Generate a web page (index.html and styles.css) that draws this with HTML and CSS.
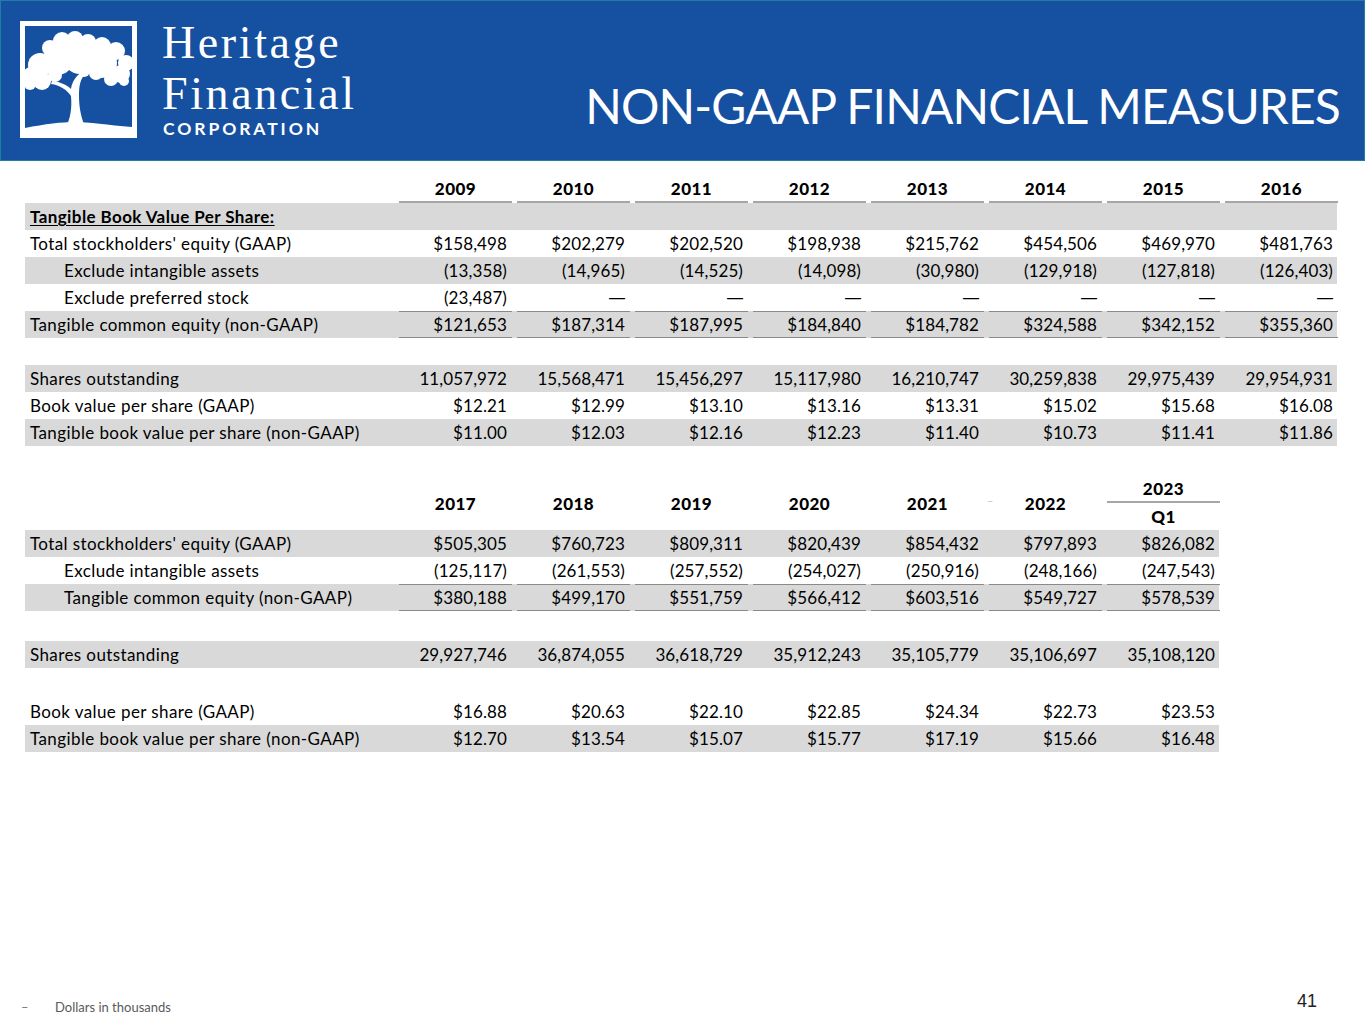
FILE: index.html
```html
<!DOCTYPE html>
<html lang="en">
<head>
<meta charset="utf-8">
<title>Non-GAAP Financial Measures</title>
<link rel="stylesheet" href="styles.css">
</head>
<body>
<div class="page">
  <header class="banner">
    <div class="logo">
      <svg class="tree" viewBox="0 0 117 117" width="117" height="117" aria-hidden="true">
        <rect x="0" y="0" width="117" height="117" fill="#fff"/>
        <rect x="5" y="5" width="107" height="107" fill="#1650a0"/>
        <g fill="#fff">
          <circle cx="30" cy="27" r="8"/>
          <circle cx="42" cy="20" r="9"/>
          <circle cx="55" cy="18" r="8"/>
          <circle cx="68" cy="21" r="8"/>
          <circle cx="82" cy="25" r="9"/>
          <circle cx="96" cy="30" r="9"/>
          <circle cx="106" cy="42" r="8"/>
          <circle cx="101" cy="53" r="9"/>
          <circle cx="82" cy="42" r="15"/>
          <circle cx="60" cy="36" r="17"/>
          <circle cx="38" cy="39" r="15"/>
          <circle cx="20" cy="44" r="12"/>
          <circle cx="11" cy="54" r="8"/>
          <circle cx="22" cy="60" r="9"/>
          <circle cx="10" cy="63" r="6"/>
          <circle cx="35" cy="54" r="7"/>
          <circle cx="91" cy="58" r="7"/>
          <circle cx="104" cy="60" r="5"/>
          <circle cx="76" cy="52" r="7"/>
          <circle cx="64" cy="50" r="6"/>
          <path d="M45 108 C51 97 52 86 51 75 C47 69 40 64 31 63 L32 60 C41 61 47 64 51 68 C52 60 57 54 63 50 L66 52 C60 58 59 65 59 75 C59 86 61 97 66 108 Z"/>
          <path d="M5 107 C25 103 42 101 55 101 C68 101 88 104 112 106 L112 112 L5 112 Z"/>
        </g>
      </svg>
      <div class="wordmark">
        <div class="wm-name">Heritage<br>Financial</div>
        <div class="wm-corp">CORPORATION</div>
      </div>
    </div>
    <h1 class="title">NON-GAAP FINANCIAL MEASURES</h1>
  </header>

  <main class="content">
    <section class="tbl t1">
      <div class="row head">
        <div class="lbl"></div>
        <div class="yr">2009</div><div class="yr">2010</div><div class="yr">2011</div><div class="yr">2012</div>
        <div class="yr">2013</div><div class="yr">2014</div><div class="yr">2015</div><div class="yr">2016</div>
      </div>
      <div class="row shade">
        <div class="lbl section">Tangible Book Value Per Share:</div>
      </div>
      <div class="row">
        <div class="lbl">Total stockholders' equity (GAAP)</div>
        <div class="num">$158,498</div><div class="num">$202,279</div><div class="num">$202,520</div><div class="num">$198,938</div>
        <div class="num">$215,762</div><div class="num">$454,506</div><div class="num">$469,970</div><div class="num">$481,763</div>
      </div>
      <div class="row shade">
        <div class="lbl ind">Exclude intangible assets</div>
        <div class="num">(13,358)</div><div class="num">(14,965)</div><div class="num">(14,525)</div><div class="num">(14,098)</div>
        <div class="num">(30,980)</div><div class="num">(129,918)</div><div class="num">(127,818)</div><div class="num">(126,403)</div>
      </div>
      <div class="row">
        <div class="lbl ind">Exclude preferred stock</div>
        <div class="num">(23,487)</div><div class="num nil">—</div><div class="num nil">—</div><div class="num nil">—</div>
        <div class="num nil">—</div><div class="num nil">—</div><div class="num nil">—</div><div class="num nil">—</div>
      </div>
      <div class="row shade total">
        <div class="lbl">Tangible common equity (non-GAAP)</div>
        <div class="num">$121,653</div><div class="num">$187,314</div><div class="num">$187,995</div><div class="num">$184,840</div>
        <div class="num">$184,782</div><div class="num">$324,588</div><div class="num">$342,152</div><div class="num">$355,360</div>
      </div>
      <div class="spacer s28"></div>
      <div class="row shade">
        <div class="lbl">Shares outstanding</div>
        <div class="num">11,057,972</div><div class="num">15,568,471</div><div class="num">15,456,297</div><div class="num">15,117,980</div>
        <div class="num">16,210,747</div><div class="num">30,259,838</div><div class="num">29,975,439</div><div class="num">29,954,931</div>
      </div>
      <div class="row">
        <div class="lbl">Book value per share (GAAP)</div>
        <div class="num">$12.21</div><div class="num">$12.99</div><div class="num">$13.10</div><div class="num">$13.16</div>
        <div class="num">$13.31</div><div class="num">$15.02</div><div class="num">$15.68</div><div class="num">$16.08</div>
      </div>
      <div class="row shade">
        <div class="lbl">Tangible book value per share (non-GAAP)</div>
        <div class="num">$11.00</div><div class="num">$12.03</div><div class="num">$12.16</div><div class="num">$12.23</div>
        <div class="num">$11.40</div><div class="num">$10.73</div><div class="num">$11.41</div><div class="num">$11.86</div>
      </div>
    </section>

    <section class="tbl t2">
      <div class="row head2">
        <div class="lbl"></div>
        <div class="yr">2017</div><div class="yr">2018</div><div class="yr">2019</div><div class="yr">2020</div>
        <div class="yr mark">2021</div><div class="yr">2022</div>
        <div class="yr stack"><span class="y-top">2023</span><span class="y-bot">Q1</span></div>
      </div>
      <div class="row shade">
        <div class="lbl">Total stockholders' equity (GAAP)</div>
        <div class="num">$505,305</div><div class="num">$760,723</div><div class="num">$809,311</div><div class="num">$820,439</div>
        <div class="num">$854,432</div><div class="num">$797,893</div><div class="num">$826,082</div>
      </div>
      <div class="row">
        <div class="lbl ind">Exclude intangible assets</div>
        <div class="num">(125,117)</div><div class="num">(261,553)</div><div class="num">(257,552)</div><div class="num">(254,027)</div>
        <div class="num">(250,916)</div><div class="num">(248,166)</div><div class="num">(247,543)</div>
      </div>
      <div class="row shade total">
        <div class="lbl ind">Tangible common equity (non-GAAP)</div>
        <div class="num">$380,188</div><div class="num">$499,170</div><div class="num">$551,759</div><div class="num">$566,412</div>
        <div class="num">$603,516</div><div class="num">$549,727</div><div class="num">$578,539</div>
      </div>
      <div class="spacer s30"></div>
      <div class="row shade">
        <div class="lbl">Shares outstanding</div>
        <div class="num">29,927,746</div><div class="num">36,874,055</div><div class="num">36,618,729</div><div class="num">35,912,243</div>
        <div class="num">35,105,779</div><div class="num">35,106,697</div><div class="num">35,108,120</div>
      </div>
      <div class="spacer s30"></div>
      <div class="row">
        <div class="lbl">Book value per share (GAAP)</div>
        <div class="num">$16.88</div><div class="num">$20.63</div><div class="num">$22.10</div><div class="num">$22.85</div>
        <div class="num">$24.34</div><div class="num">$22.73</div><div class="num">$23.53</div>
      </div>
      <div class="row shade">
        <div class="lbl">Tangible book value per share (non-GAAP)</div>
        <div class="num">$12.70</div><div class="num">$13.54</div><div class="num">$15.07</div><div class="num">$15.77</div>
        <div class="num">$17.19</div><div class="num">$15.66</div><div class="num">$16.48</div>
      </div>
    </section>
  </main>

  <footer class="foot">
    <div class="note"><span class="dash">–</span><span>Dollars in thousands</span></div>
    <div class="pgnum">41</div>
  </footer>
</div>
</body>
</html>
```

FILE: styles.css
```css
* { box-sizing: border-box; }
html, body { margin: 0; padding: 0; background: #fff; }
body {
  font-family: Lato, "Noto Sans", "Liberation Sans", sans-serif;
  color: #000;
}
.page {
  width: 1365px;
  height: 1024px;
  display: flex;
  flex-direction: column;
}

/* Banner */
.banner {
  height: 161px;
  background: #1650a0;
  border: 1px solid #1e7fa3;
  display: flex;
  justify-content: space-between;
  align-items: flex-start;
  flex-shrink: 0;
}
.logo {
  display: flex;
  align-items: flex-start;
  padding: 20px 0 0 19px;
}
.tree { display: block; }
.wordmark {
  margin-left: 25px;
  margin-top: -4px;
  color: #fff;
}
.wm-name {
  font-family: "Liberation Serif", "DejaVu Serif", serif;
  font-size: 46px;
  line-height: 51px;
  letter-spacing: 2.6px;
}
.wm-corp {
  font-family: Lato, "Noto Sans", sans-serif;
  font-weight: 700;
  font-size: 17.5px;
  letter-spacing: 2.9px;
  line-height: 24px;
  margin-top: -2px;
  margin-left: 1px;
}
.title {
  margin: 77px 24px 0 0;
  color: #fff;
  font-family: Lato, "Noto Sans", sans-serif;
  font-weight: 400;
  font-size: 48px;
  letter-spacing: -0.9px;
  line-height: 56px;
  white-space: nowrap;
}

/* Tables */
.content {
  padding: 14px 0 0 25px;
  display: flex;
  flex-direction: column;
}
.tbl { display: flex; flex-direction: column; }
.t2 { margin-top: 30px; }
.row {
  display: grid;
  grid-template-columns: 369px repeat(8, 113px);
  column-gap: 5px;
  height: 27px;
  font-size: 17px;
}
.t1 .row { width: 1312px; }
.t2 .row { width: 1194px; grid-template-columns: 369px repeat(7, 113px); }
.shade { background: #d9d9d9; }
.lbl {
  padding-left: 5px;
  display: flex;
  align-items: center;
  white-space: nowrap;
  letter-spacing: 0.4px;
}
.ind { padding-left: 39px; }
.section {
  font-weight: 700;
  text-decoration: underline;
  text-underline-offset: 2px;
  text-decoration-thickness: 1px;
}
.num {
  display: flex;
  align-items: center;
  justify-content: flex-end;
  padding-right: 5px;
  white-space: nowrap;
  letter-spacing: 0.1px;
}
.nil {
  font-family: "Liberation Sans", Arial, sans-serif;
  font-size: 16px;
}
.total .num {
  border-top: 1px solid #8a8a8a;
  border-bottom: 1px solid #8a8a8a;
}
.yr {
  display: flex;
  align-items: center;
  justify-content: center;
  font-weight: 900;
  font-size: 17px;
  letter-spacing: 0.5px;
}
.head .yr { border-bottom: 2px solid #a6a6a6; }
.head { height: 28px; }
.head2 { height: 54px; }
.mark { position: relative; }
.mark::after {
  content: "–";
  position: absolute;
  right: -10px;
  top: 17px;
  font-weight: 400;
  font-size: 12px;
  color: #c8c8c8;
}
.stack {
  flex-direction: column;
  justify-content: flex-start;
  align-items: stretch;
}
.y-top {
  height: 27px;
  display: flex;
  align-items: center;
  justify-content: center;
  border-bottom: 2px solid #a6a6a6;
}
.y-bot {
  height: 27px;
  display: flex;
  align-items: center;
  justify-content: center;
}
.spacer.s28 { height: 27px; }
.spacer.s30 { height: 30px; }

/* Footer */
.foot {
  margin-top: auto;
  height: 40px;
  display: flex;
  justify-content: space-between;
  align-items: flex-start;
  padding: 0 48px 0 21px;
}
.note {
  display: flex;
  font-size: 13px;
  color: #5a5a5a;
  padding-top: 15px;
}
.dash { width: 34px; color: #777; }
.pgnum {
  font-family: "Liberation Sans", Arial, sans-serif;
  font-size: 18px;
  color: #222;
  padding-top: 7px;
}
```
